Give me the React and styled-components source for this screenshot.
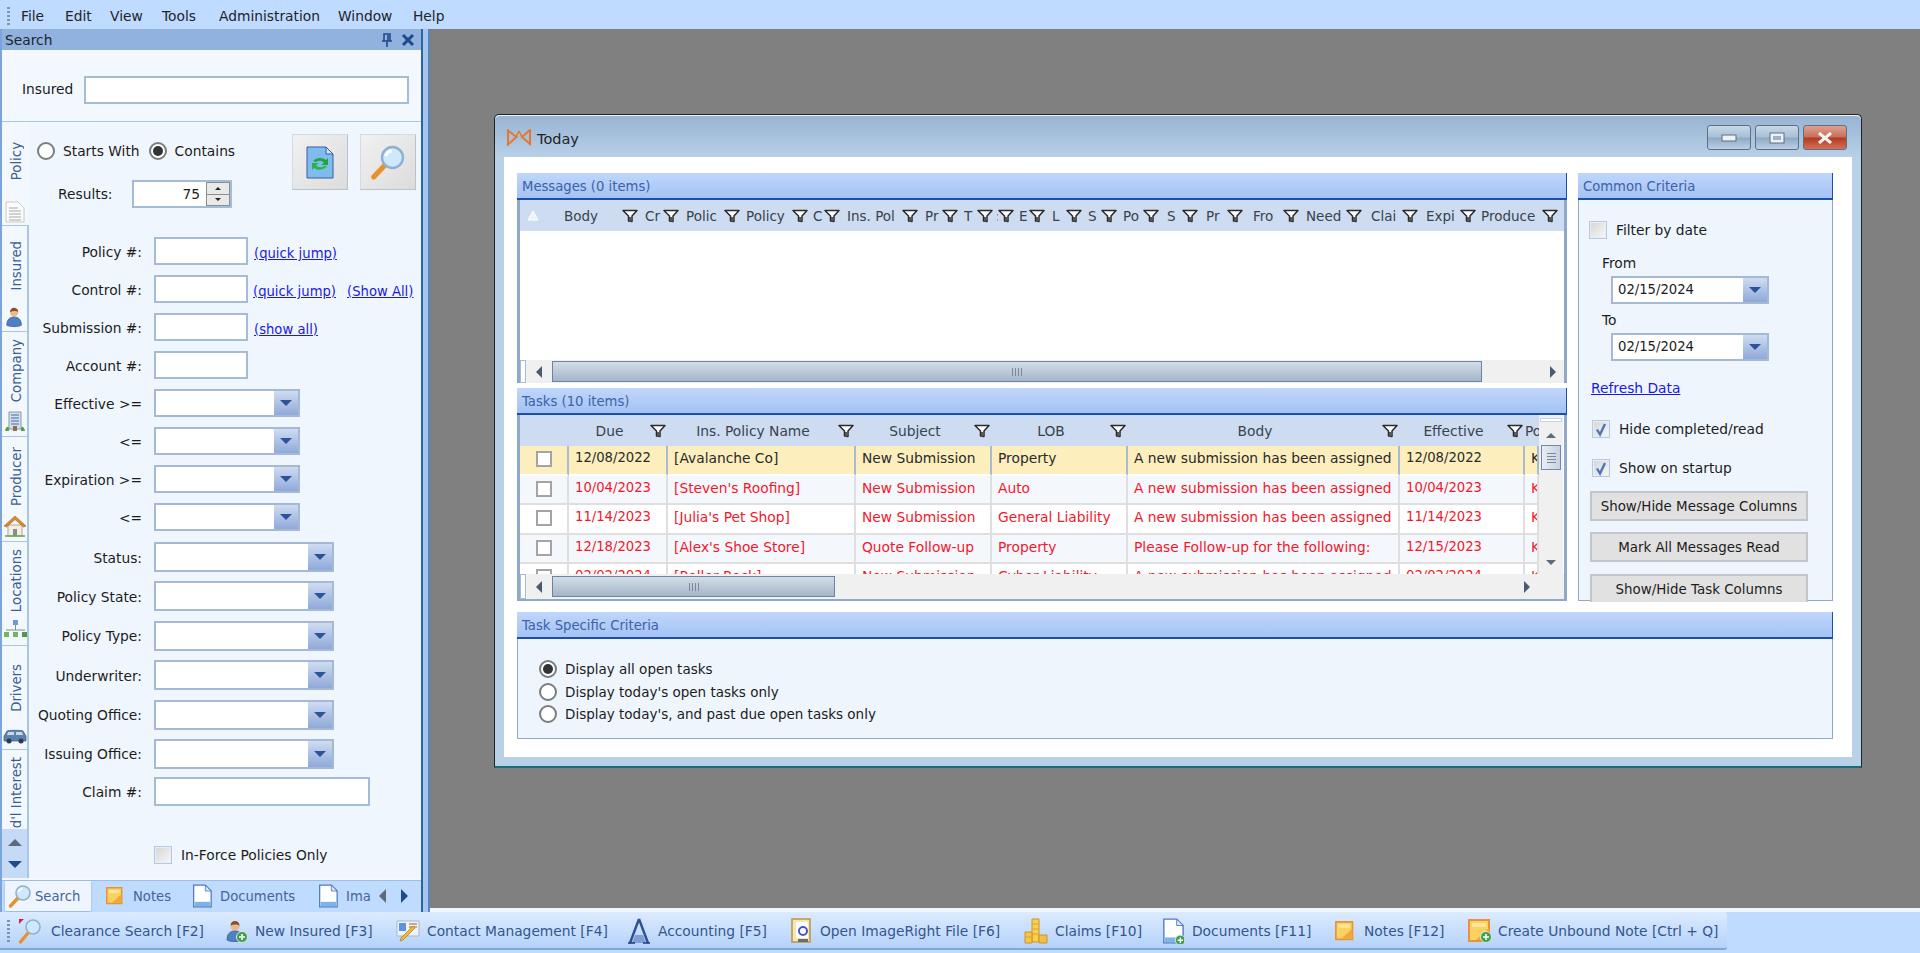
import React from 'react'
import styled, { createGlobalStyle } from 'styled-components'

const FONT = '"DejaVu Sans", "Noto Sans", sans-serif'
const LINK = '#1a1ae6'
const TASK_COLS = '49px 99px 188px 136px 136px 272px 125px 14px'

const GlobalStyle = createGlobalStyle`
  html, body { margin: 0; padding: 0; height: 100%; overflow: hidden; background: #bfdbff; }
  * { box-sizing: border-box; }
  body { font-family: ${FONT}; font-size: 13.8px; color: #1c1c1c; }
`

const Page = styled.div`
  width: 1920px;
  height: 953px;
  display: flex;
  flex-direction: column;
  background: #bfdbff;
`

/* ---------- menu ---------- */
const MenuBar = styled.div`
  height: 29px;
  flex: none;
  display: flex;
  align-items: center;
  padding: 2px 0 0 21px;
  background: #bfdbff;
`
const MenuItem = styled.div`
  width: ${p => p.$w}px;
  color: #22242a;
`
const Grip = styled.span`
  width: 3px;
  height: ${p => p.$h}px;
  flex: none;
  margin-left: ${p => p.$left}px;
  margin-right: ${p => p.$right}px;
  background: repeating-linear-gradient(to bottom, #7f93ad 0 2px, transparent 2px 4px);
`

/* ---------- workspace ---------- */
const Workspace = styled.div`
  flex: none;
  height: 883px;
  display: flex;
`
const SidePanel = styled.div`
  width: 421px;
  flex: none;
  display: flex;
  flex-direction: column;
  border-left: 2px solid #7ba4dc;
  background: #f3f8fe;
`
const PanelTitle = styled.div`
  height: 21px;
  flex: none;
  background: #91b2df;
  display: flex;
  align-items: center;
  padding: 0 6px 0 3px;
  color: #20242c;
  span { flex: 1; }
  svg { margin-left: 8px; }
`
const InsuredBar = styled.div`
  height: 72px;
  flex: none;
  display: flex;
  align-items: center;
  padding: 9px 0 0 20px;
  border-bottom: 1px solid #a9c6e8;
`
const InsuredLabel = styled.span`
  width: 62px;
  flex: none;
  padding-bottom: 2px;
`
const Input = styled.div`
  width: ${p => p.$w}px;
  height: ${p => p.$h || 28}px;
  flex: none;
  background: #fff;
  border: 2px solid #a5bcd8;
`
const SideBody = styled.div`
  flex: none;
  height: 756px;
  display: flex;
`
const Rail = styled.div`
  width: 27px;
  flex: none;
  display: flex;
  flex-direction: column;
  overflow: hidden;
`
const RailTab = styled.div`
  height: ${p => p.$h}px;
  flex: none;
  display: flex;
  flex-direction: column;
  align-items: center;
  overflow: hidden;
  border-right: ${p => (p.$active ? '2px solid transparent' : '2px solid #a9c6e8')};
  border-top: ${p => (p.$first ? 'none' : p.$active ? 'none' : '1px solid #a9c6e8')};
`
const RailLabel = styled.div`
  flex: 1;
  min-height: 0;
  display: flex;
  align-items: ${p => (p.$clip ? 'flex-start' : 'center')};
  justify-content: center;
  padding: ${p => (p.$clip ? 7 : 0)}px 0 0 3px;
  width: 100%;
  overflow: hidden;
  span {
    writing-mode: vertical-rl;
    transform: rotate(180deg);
    white-space: nowrap;
    font-size: 13.3px;
    color: #3b5f94;
  }
`
const RailIcon = styled.div`
  height: ${p => p.$h}px;
  flex: none;
  display: flex;
  align-items: flex-start;
  justify-content: center;
`
const RailScroll = styled.div`
  flex: 1;
  background: #c4daf7;
  border-right: 2px solid #a9c6e8;
  display: flex;
  flex-direction: column;
  align-items: center;
  justify-content: space-around;
  padding: 2px 0;
`
const FormArea = styled.div`
  flex: 1;
  display: flex;
  flex-direction: column;
  min-width: 0;
  background: #f0f6fe;
`
const SearchTop = styled.div`
  height: 115px;
  flex: none;
  display: flex;
  justify-content: space-between;
  padding: 12px 5px 0 8px;
`
const RadioRow = styled.div`
  display: flex;
  align-items: center;
  height: 18px;
  margin-top: 8px;
`
const RadioText = styled.span`
  margin: 0 9px 0 8px;
  white-space: nowrap;
`
const Radio = styled.span`
  width: 18px;
  height: 18px;
  flex: none;
  border-radius: 50%;
  border: 2px solid #7c7c7c;
  background: #fff;
  display: flex;
  align-items: center;
  justify-content: center;
  &::after {
    content: '';
    width: 10px;
    height: 10px;
    border-radius: 50%;
    background: ${p => (p.$on ? '#333' : 'transparent')};
  }
`
const ResultsRow = styled.div`
  display: flex;
  align-items: center;
  margin-top: 20px;
  padding-left: 21px;
`
const ResultsLabel = styled.span`
  width: 74px;
  flex: none;
`
const Spinner = styled.div`
  width: 100px;
  height: 28px;
  display: flex;
  background: #fff;
  border: 2px solid #a5bcd8;
`
const SpinValue = styled.div`
  flex: 1;
  text-align: right;
  padding-right: 6px;
  line-height: 24px;
`
const SpinBtns = styled.div`
  width: 24px;
  display: flex;
  flex-direction: column;
  gap: 1px;
  background: #8a8f96;
  padding: 1px;
`
const SpinBtn = styled.div`
  flex: 1;
  background: #e9e9e9;
  display: flex;
  align-items: center;
  justify-content: center;
`
const BigButtons = styled.div`
  display: flex;
  gap: 12px;
`
const BigButton = styled.div`
  width: 56px;
  height: 56px;
  background: linear-gradient(135deg, #f1f1f1, #dcdcdc);
  border: 1px solid #d2dbe5;
  border-right-color: #b9c3ce;
  border-bottom-color: #b9c3ce;
  display: flex;
  align-items: center;
  justify-content: center;
`
const FieldGroup = styled.div`
  display: flex;
  flex-direction: column;
  gap: ${p => p.$gap}px;
  margin-top: ${p => p.$top || 0}px;
`
const Field = styled.div`
  display: flex;
  align-items: center;
  height: ${p => p.$h}px;
`
const Label = styled.div`
  width: 113px;
  flex: none;
  margin-right: 12px;
  padding-top: 1px;
  text-align: right;
  white-space: nowrap;
`
const Link = styled.a`
  color: ${LINK};
  font-size: 13.2px;
  text-decoration: underline;
  white-space: nowrap;
  margin-left: ${p => p.$left}px;
  margin-top: 5px;
`
const ComboBox = styled.div`
  width: ${p => p.$w}px;
  height: ${p => p.$h}px;
  flex: none;
  display: flex;
  background: #fff;
  border: 2px solid #a3b9d6;
`
const ComboText = styled.div`
  flex: 1;
  padding-left: 5px;
  font-size: 13.2px;
  line-height: ${p => p.$h - 5}px;
`
const ComboBtn = styled.div`
  width: 24px;
  flex: none;
  background: linear-gradient(to bottom, #cfdcf2, #8fa9d8);
  display: flex;
  align-items: center;
  justify-content: center;
  &::after {
    content: '';
    border-left: 6px solid transparent;
    border-right: 6px solid transparent;
    border-top: 6px solid #2c5299;
  }
`
const CheckRow = styled.div`
  display: flex;
  align-items: center;
  gap: 9px;
  margin: ${p => p.$m};
`
const CheckBox = styled.span`
  width: 18px;
  height: 18px;
  flex: none;
  background: linear-gradient(135deg, #d5d5d5, #f8f8f8);
  border: 1px solid #b5c9e2;
  box-shadow: inset 0 0 0 1px #e6eef8;
  display: flex;
  align-items: center;
  justify-content: center;
`
const BottomTabs = styled.div`
  height: 33px;
  flex: none;
  margin-top: 2px;
  display: flex;
  align-items: flex-start;
  background: #bfdbff;
  border-top: 1px solid #9fbee4;
  padding-left: 3px;
  color: #45639a;
  font-size: 13.2px;
`
const BottomTab = styled.div`
  width: ${p => p.$w}px;
  height: 30px;
  flex: none;
  display: flex;
  align-items: center;
  gap: ${p => p.$gap}px;
  padding-left: ${p => p.$pad}px;
  overflow: hidden;
  white-space: nowrap;
  background: ${p => (p.$active ? '#eef5fe' : 'transparent')};
  box-shadow: ${p => (p.$active ? '0 1px 2px #8fb0da' : 'none')};
`
const Arrows = styled.div`
  display: flex;
  gap: 15px;
  height: 30px;
  align-items: center;
`

const Splitter = styled.div`
  width: 9px;
  flex: none;
  background: #a7c6ee;
  border-left: 2px solid #2f63a4;
  border-right: 2px solid #5b85b8;
`
const Desktop = styled.div`
  flex: 1;
  position: relative;
  background: #808080;
  border-bottom: 4px solid #f0f6fe;
`

/* ---------- today window ---------- */
const Win = styled.div`
  position: absolute;
  left: 64px;
  top: 85px;
  width: 1368px;
  height: 654px;
  display: flex;
  flex-direction: column;
  background: #b8d0e8;
  border: 1px solid #222;
  border-bottom: 2px solid #1a6d78;
  border-radius: 5px 5px 0 0;
  padding: 0 9px 9px;
`
const WinTitle = styled.div`
  height: 42px;
  flex: none;
  margin: 0 -9px;
  padding: 2px 14px 0 12px;
  display: flex;
  align-items: center;
  background: linear-gradient(to bottom, #98b4d2, #b8d0e8);
  border-top: 1px solid #eef4fa;
  border-radius: 5px 5px 0 0;
`
const WinName = styled.div`
  flex: 1;
  font-size: 14.5px;
  color: #1e2328;
  margin-left: 6px;
  padding-top: 3px;
`
const WinBtns = styled.div`
  display: flex;
  gap: 4px;
`
const WinBtn = styled.div`
  width: 44px;
  height: 25px;
  border: 1px solid #5e6f80;
  border-radius: 3px;
  display: flex;
  align-items: center;
  justify-content: center;
  background: ${p =>
    p.$close
      ? 'linear-gradient(to bottom, #e0a090 0, #c5705c 48%, #b03a20 52%, #d8705a 100%)'
      : 'linear-gradient(to bottom, #c8d8e8 0, #a9c0d8 48%, #8fa9c4 52%, #bcd0e4 100%)'};
`
const Client = styled.div`
  flex: 1;
  background: #fff;
  padding: 16px 19px 18px 13px;
  display: flex;
  flex-direction: column;
  gap: 11px;
  min-height: 0;
`
const TopRow = styled.div`
  height: 428px;
  flex: none;
  display: flex;
  gap: 11px;
`
const LeftCol = styled.div`
  width: 1050px;
  flex: none;
  display: flex;
  flex-direction: column;
  gap: 5px;
`
const GridSection = styled.div`
  height: ${p => p.$h}px;
  flex: none;
  display: flex;
  flex-direction: column;
`
const GroupHead = styled.div`
  height: 27px;
  flex: none;
  padding-left: 5px;
  line-height: 28px;
  font-size: 13.2px;
  color: #3c62a8;
  background: linear-gradient(to bottom, #c0d7fb, #a4c2f4);
  border-bottom: 2px solid #1c4fa6;
  border-right: 1px solid #1c4fa6;
  white-space: nowrap;
`
const GridBox = styled.div`
  flex: 1;
  min-height: 0;
  display: flex;
  flex-direction: column;
  background: #fff;
  border-left: 3px solid #8eaac8;
  border-right: 3px solid #8eaac8;
  border-bottom: ${p => (p.$foot ? '2px solid #8eaac8' : 'none')};
`
const GridHead = styled.div`
  height: 31px;
  flex: none;
  display: ${p => (p.$grid ? 'grid' : 'flex')};
  grid-template-columns: ${TASK_COLS};
  background: #cddcf0;
  overflow: hidden;
`
const HeadCell = styled.div`
  width: ${p => p.$w}px;
  flex: none;
  display: flex;
  align-items: center;
  padding-left: ${p => p.$pad}px;
  padding-right: 1px;
  color: #39424e;
  font-size: 13.5px;
  white-space: nowrap;
  overflow: hidden;
  span { flex: 1; overflow: hidden; }
  svg { flex: none; }
`
const TaskHeadCell = styled.div`
  display: flex;
  align-items: center;
  padding-right: 2px;
  color: #39424e;
  white-space: nowrap;
  overflow: hidden;
  span { flex: 1; text-align: center; }
  svg { flex: none; }
`
const MsgBody = styled.div`
  flex: 1;
`
const HScroll = styled.div`
  height: ${p => p.$h}px;
  flex: none;
  display: flex;
  align-items: center;
  background: #f0f0f0;
`
const ScrollStub = styled.span`
  width: 6px;
  height: 100%;
  flex: none;
  background: #fff;
  border: 1px solid #a5bcd8;
`
const ArrowCell = styled.span`
  width: ${p => p.$w}px;
  flex: none;
  display: flex;
  justify-content: center;
`
const Thumb = styled.div`
  width: ${p => p.$w}px;
  flex: none;
  height: 21px;
  background: linear-gradient(to bottom, #d4dde8, #a4b5c8);
  border: 1px solid #6d82a8;
  display: flex;
  align-items: center;
  justify-content: center;
`
const GripLines = styled.span`
  width: 10px;
  height: 8px;
  background: repeating-linear-gradient(to right, #7e8794 0 1px, transparent 1px 3px);
`
const EndArrow = styled.span`
  margin-left: auto;
  margin-right: ${p => p.$right}px;
  display: flex;
`
const TaskWrap = styled.div`
  flex: 1;
  min-height: 0;
  display: flex;
`
const TaskView = styled.div`
  width: 1019px;
  flex: none;
  overflow: hidden;
`
const TaskRow = styled.div`
  display: grid;
  grid-template-columns: ${TASK_COLS};
  height: 29.5px;
  background: ${p => (p.$sel ? '#fdeebd' : p.$alt ? '#f4f8fd' : '#fff')};
  color: ${p => (p.$sel ? '#2a2a2a' : '#f4172a')};
`
const TaskCell = styled.div`
  padding: 4px 0 0 6px;
  white-space: nowrap;
  overflow: hidden;
  font-size: ${p => (p.$date ? 13.2 : 13.8)}px;
  border-right: 2px solid ${p => (p.$sel ? '#a9bccf' : '#dfdfdf')};
  border-bottom: 2px solid ${p => (p.$sel ? '#fff' : '#dfdfdf')};
`
const TaskCheckCell = styled(TaskCell)`
  padding: 5px 0 0 16px;
`
const RowCheck = styled.span`
  display: block;
  width: 16px;
  height: 16px;
  background: #fff;
  border: 2px solid #a4a4a4;
`
const VScroll = styled.div`
  width: 24px;
  flex: none;
  display: flex;
  flex-direction: column;
  align-items: center;
  background: #f0f0f0;
`
const VStub = styled.span`
  width: 22px;
  height: 4px;
  margin: 3px 0 11px;
  background: #fff;
  border: 1px solid #c5d4e6;
`
const VThumb = styled.div`
  width: 20px;
  height: 25px;
  margin: 7px 0 auto;
  background: linear-gradient(to right, #e8eef5, #c5d2e2);
  border: 1px solid #7287ac;
  display: flex;
  align-items: center;
  justify-content: center;
  span {
    width: 9px;
    height: 10px;
    background: repeating-linear-gradient(to bottom, #7e8794 0 1px, transparent 1px 3px);
  }
`
const VEnd = styled.span`
  display: flex;
  margin-bottom: 9px;
`
const RightCol = styled.div`
  flex: 1;
  display: flex;
  flex-direction: column;
  min-width: 0;
`
const CriteriaBody = styled.div`
  flex: 1;
  min-height: 0;
  background: #eef5fd;
  border: 1px solid #92a9c4;
  border-top: none;
  padding: 21px 0 0 10px;
`
const SmallLabel = styled.div`
  margin: ${p => p.$m};
  line-height: 18px;
`
const ComboSlot = styled.div`
  margin: ${p => p.$m};
`
const RefreshLink = styled.a`
  display: block;
  color: ${LINK};
  text-decoration: underline;
  margin: 18px 0 0 2px;
  line-height: 18px;
`
const CmdButton = styled.div`
  width: 218px;
  height: ${p => p.$h}px;
  margin: ${p => p.$m};
  background: #e1e1e1;
  border: 2px solid #c0c6cc;
  border-bottom-width: ${p => (p.$cut ? 0 : 2)}px;
  display: flex;
  align-items: center;
  justify-content: center;
  white-space: nowrap;
  font-size: 13.4px;
`
const TaskPanel = styled.div`
  flex: 1;
  display: flex;
  flex-direction: column;
`
const TaskBody = styled.div`
  flex: 1;
  background: #eef5fd;
  border: 1px solid #92a9c4;
  border-top: none;
  padding: 21px 0 0 21px;
  display: flex;
  flex-direction: column;
  gap: 4.6px;
  font-size: 13.5px;
`
const OptionRow = styled.div`
  display: flex;
  align-items: center;
  gap: 8px;
  height: 18px;
`

/* ---------- bottom tool strip ---------- */
const ToolStrip = styled.div`
  height: 38px;
  width: 1727px;
  flex: none;
  display: flex;
  align-items: center;
  padding-top: 1px;
  background: linear-gradient(to bottom, #dcebff, #b5d2fa);
  border-bottom: 2px solid #7ca6df;
  border-radius: 0 3px 3px 0;
  color: #34558f;
`
const ToolItem = styled.div`
  width: ${p => p.$w}px;
  flex: none;
  display: flex;
  align-items: center;
  gap: ${p => p.$gap}px;
  white-space: nowrap;
`

/* ---------- drawings ---------- */
const Tri = ({ dir, size = 7, fill = '#2c5299' }) => {
  const pts = {
    up: `0,${size} ${size},0 ${size * 2},${size}`,
    down: `0,0 ${size * 2},0 ${size},${size}`,
  }
  if (dir === 'left' || dir === 'right') {
    return (
      <svg width={size} height={size * 2} viewBox={`0 0 ${size} ${size * 2}`}>
        <polygon fill={fill} points={dir === 'left' ? `${size},0 ${size},${size * 2} 0,${size}` : `0,0 ${size},${size} 0,${size * 2}`} />
      </svg>
    )
  }
  return (
    <svg width={size * 2} height={size} viewBox={`0 0 ${size * 2} ${size}`}>
      <polygon fill={fill} points={pts[dir]} />
    </svg>
  )
}
const Funnel = () => (
  <svg width="16" height="14" viewBox="0 0 16 14">
    <path d="M1 1.500h14L10 7v5.500L6.500 12V7z" fill="#fff" stroke="#2a2a2a" strokeWidth="1.500" strokeLinejoin="round" />
    <path d="M7 8h2.500v4.500H7z" fill="#555" />
  </svg>
)
const Loupe = ({ s = 24 }) => (
  <svg width={s} height={s} viewBox="0 0 24 24">
    <path d="M2.500 22L10 14" stroke="#e8912a" strokeWidth="3.400" strokeLinecap="round" />
    <circle cx="15" cy="9" r="7" fill="#cfe8fa" stroke="#8eb0d4" strokeWidth="1.600" />
    <path d="M10.500 8a5 5 0 0 1 4-3.500" stroke="#fff" strokeWidth="2" fill="none" />
  </svg>
)
const RefreshDoc = () => (
  <svg width="28" height="33" viewBox="0 0 28 33">
    <path d="M1 1h19l7 7v24H1z" fill="#7fbcec" stroke="#3a5aa8" />
    <path d="M20 1l7 7h-7z" fill="#c8e2f8" stroke="#3a5aa8" />
    <path d="M7 15a8 6 0 0 1 13-1l2-2v7h-7l3-2a5 4 0 0 0-8-1z" fill="#1fa33a" />
    <path d="M21 20a8 6 0 0 1-13 2l-2 2v-7h7l-3 2a5 4 0 0 0 8 1z" fill="#27b548" />
  </svg>
)
const PageLines = () => (
  <svg width="20" height="22" viewBox="0 0 20 22">
    <path d="M1 1h12l6 6v14H1z" fill="#fbfbfb" stroke="#c9c9c9" />
    <path d="M4 7h9M4 10h12M4 13h12M4 16h12M4 19h12" stroke="#a8a8a8" />
  </svg>
)
const PlusBadge = () => (
  <g>
    <circle cx="18" cy="18" r="5.500" fill="#3f9f50" stroke="#d6eed8" />
    <path d="M18 15v6M15 18h6" stroke="#fff" strokeWidth="1.600" />
  </g>
)
const Person = ({ s = 24, plus }) => (
  <svg width={s} height={s} viewBox="0 0 24 24">
    <circle cx="11" cy="7" r="4.500" fill="#eab98c" />
    <path d="M6.500 6.500a4.500 4.500 0 0 1 9 0c-2-1.500-6-1.500-9 0z" fill="#8a4f25" />
    <path d="M3 21c0-6 3-9 8-9s8 3 8 9c-3 2-13 2-16 0z" fill="#4f7fc4" stroke="#2d528c" strokeWidth=".7" />
    {plus && <PlusBadge />}
  </svg>
)
const Building = () => (
  <svg width="20" height="22" viewBox="0 0 20 22">
    <path d="M4 2h12v17H4z" fill="#d8dee6" stroke="#8c98a6" />
    <path d="M6 5h8M6 8h8M6 11h8M6 14h8" stroke="#6d93cc" strokeWidth="1.500" />
    <path d="M0 21c1-5 3-5 4-3v3zM20 21c-1-5-3-5-4-3v3z" fill="#54a04e" />
    <path d="M8 16h4v5H8z" fill="#8b6f4a" />
  </svg>
)
const House = () => (
  <svg width="24" height="22" viewBox="0 0 24 22">
    <path d="M5 10h14v11H5z" fill="#f4efe0" stroke="#b0a78e" />
    <path d="M1 11L12 1l11 10-2.500 1L12 4.500 3.500 12z" fill="#d88a2e" stroke="#a8641a" strokeWidth=".6" />
    <path d="M10 14h4v7h-4z" fill="#8d8d8d" />
    <path d="M2 21h20" stroke="#6aa85a" strokeWidth="1.600" />
  </svg>
)
const Network = () => (
  <svg width="24" height="19" viewBox="0 0 24 19">
    <rect x="10" y="1" width="5" height="5" fill="#6d9ad8" />
    <path d="M12.500 6v5M3 11h19" stroke="#8a8a8a" />
    <rect x="1" y="13" width="5" height="5" fill="#6cb760" />
    <rect x="10" y="13" width="5" height="5" fill="#6cb760" />
    <rect x="19" y="13" width="5" height="5" fill="#4f9a45" />
  </svg>
)
const Car = () => (
  <svg width="24" height="15" viewBox="0 0 24 15">
    <path d="M1 7l3-5c1-1 15-1 16 0l3 5v5H1z" fill="#5d81ad" stroke="#3d5a80" strokeWidth=".7" />
    <path d="M5 3h6v3H4zM13 3h6l1 3h-7z" fill="#c7d8ea" />
    <circle cx="6" cy="12" r="2.500" fill="#2e3a48" />
    <circle cx="18" cy="12" r="2.500" fill="#2e3a48" />
  </svg>
)
const Note = ({ plus, w = 18, h = 18 }) => (
  <svg width={w} height={h} viewBox="0 0 24 24">
    <path d="M1 1h20v21H1z" fill="#fbd25f" stroke="#e8923a" strokeWidth="2" />
    <path d="M8 21L21 9v12z" fill="#f0a83c" />
    <path d="M4 4h14v4H4z" fill="#fde79a" />
    {plus && <PlusBadge />}
  </svg>
)
const DocBlue = ({ plus, w = 20, h = 24 }) => (
  <svg width={w} height={h} viewBox="0 0 24 28">
    <path d="M2 1h14l7 7v19H2z" fill="#fff" stroke="#4d7cc0" strokeWidth="1.500" />
    <path d="M16 1l7 7h-7z" fill="#dbe8f8" stroke="#4d7cc0" />
    <path d="M3 21h19v5H3z" fill="#7db3e8" />
    {plus && (
      <g transform="translate(2 6)">
        <PlusBadge />
      </g>
    )}
  </svg>
)
const ClearanceIcon = () => (
  <svg width="24" height="26" viewBox="0 0 24 26">
    <path d="M1 1h5L1 6z" fill="#d9262e" />
    <path d="M2.500 24L10 15" stroke="#e8912a" strokeWidth="3.400" strokeLinecap="round" />
    <circle cx="15" cy="9" r="7" fill="#cfe8fa" stroke="#8eb0d4" strokeWidth="1.600" />
  </svg>
)
const ContactIcon = () => (
  <svg width="24" height="24" viewBox="0 0 24 24">
    <path d="M1 2h22v15H1z" fill="#eef3f9" stroke="#a8b6c6" />
    <path d="M3 4h7v8H3z" fill="#5d93d8" />
    <path d="M13 5h8M13 8h8" stroke="#c88a6a" strokeWidth="1.500" />
    <path d="M4 22l3-1 12-12-2-2L5 19z" fill="#efb93c" stroke="#a8791c" strokeWidth=".7" />
  </svg>
)
const AccountingIcon = () => (
  <svg width="22" height="26" viewBox="0 0 22 26">
    <path d="M11 1L2 25M11 1l9 24" stroke="#2d4f94" strokeWidth="2.400" fill="none" />
    <path d="M7 17h8l3 8H4z" fill="#7f9fd4" />
    <path d="M0 25h7M15 25h7" stroke="#1f3d78" strokeWidth="1.500" />
  </svg>
)
const ImageRightIcon = () => (
  <svg width="22" height="26" viewBox="0 0 22 26">
    <path d="M2 1h18v23H2z" fill="#f6e6ae" stroke="#b8954a" strokeWidth="1.500" />
    <path d="M6 4h12v16H6z" fill="#fff" />
    <circle cx="13" cy="13" r="4" fill="none" stroke="#4458c4" strokeWidth="2" />
    <path d="M8 24h10v-3H8z" fill="#6c6c6c" />
  </svg>
)
const CoinsIcon = () => (
  <svg width="24" height="26" viewBox="0 0 24 26">
    <path d="M8 1h7v23H8z" fill="#f8cf4f" stroke="#c9952a" />
    <path d="M1 14h7v11H1z" fill="#f6c544" stroke="#c9952a" />
    <path d="M15 17h8v8h-8z" fill="#f4bf3e" stroke="#c9952a" />
    <path d="M8 6h7M8 11h7M8 16h7M1 19h7" stroke="#d9a431" />
  </svg>
)
const BowTie = () => (
  <svg width="24" height="17" viewBox="0 0 24 17">
    <path d="M1 1.500v14L9.500 8zM23 1v14L15 8z" fill="none" stroke="#e6762e" strokeWidth="2" />
    <path d="M9 8l3-6M15 8l-3-6" stroke="#e6762e" strokeWidth="1.500" />
  </svg>
)
const Tick = () => (
  <svg width="14" height="15" viewBox="0 0 14 15">
    <path d="M3 7.500l3 5L11 2" fill="none" stroke="#4d78b8" strokeWidth="2.400" />
  </svg>
)

/* ---------- data ---------- */
const MENU = [['File', 44], ['Edit', 45], ['View', 52], ['Tools', 57], ['Administration', 119], ['Window', 75], ['Help', 50]]

const RAIL = [
  { label: 'Policy', h: 103, icon: <PageLines />, ih: 24, active: true, first: true },
  { label: 'Insured', h: 106, icon: <Person s={22} />, ih: 25 },
  { label: 'Company', h: 105, icon: <Building />, ih: 26 },
  { label: 'Producer', h: 105, icon: <House />, ih: 26 },
  { label: 'Locations', h: 104, icon: <Network />, ih: 26 },
  { label: 'Drivers', h: 104, icon: <Car />, ih: 20 },
]

const TEXT_FIELDS = [
  { label: 'Policy #:', links: [['(quick jump)', 6]] },
  { label: 'Control #:', links: [['(quick jump)', 5], ['(Show All)', 11]] },
  { label: 'Submission #:', links: [['(show all)', 6]] },
  { label: 'Account #:', links: [] },
]
const DATE_FIELDS = ['Effective >=', '<=', 'Expiration >=', '<=']
const COMBO_FIELDS = ['Status:', 'Policy State:', 'Policy Type:', 'Underwriter:', 'Quoting Office:', 'Issuing Office:']

const MSG_COLS = [
  ['Body', 95, 20], ['Cr', 41, 6], ['Polic', 61, 6], ['Policy', 68, 5], ['C', 32, 4], ['Ins. Pol', 78, 6],
  ['Pr', 40, 6], ['T', 35, 5], [':', 21, 2], ['E', 31, 4], ['L', 37, 6], ['S', 35, 5], ['Po', 42, 5],
  ['S', 39, 7], ['Pr', 45, 7], ['Fro', 56, 9], ['Need', 63, 6], ['Clai', 56, 8], ['Expi', 58, 7], ['Produce', 82, 4],
]
const TASK_HEAD = ['Due', 'Ins. Policy Name', 'Subject', 'LOB', 'Body', 'Effective']
const ASSIGNED = 'A new submission has been assigned'
const TASKS = [
  ['12/08/2022', '[Avalanche Co]', 'New Submission', 'Property', ASSIGNED, '12/08/2022', 'K'],
  ['10/04/2023', "[Steven's Roofing]", 'New Submission', 'Auto', ASSIGNED, '10/04/2023', 'K'],
  ['11/14/2023', "[Julia's Pet Shop]", 'New Submission', 'General Liability', ASSIGNED, '11/14/2023', 'K'],
  ['12/18/2023', "[Alex's Shoe Store]", 'Quote Follow-up', 'Property', 'Please Follow-up for the following:', '12/15/2023', 'K'],
  ['02/02/2024', '[Roller Rock]', 'New Submission', 'Cyber Liability', ASSIGNED, '02/02/2024', 'K'],
]
const DATE_COLUMNS = [0, 5]
const OPTIONS = ['Display all open tasks', "Display today's open tasks only", "Display today's, and past due open tasks only"]
const TOOLS = [
  ['Clearance Search [F2]', <ClearanceIcon />, 206, 9],
  ['New Insured [F3]', <Person s={24} plus />, 172, 7],
  ['Contact Management [F4]', <ContactIcon />, 232, 7],
  ['Accounting [F5]', <AccountingIcon />, 162, 8],
  ['Open ImageRight File [F6]', <ImageRightIcon />, 234, 8],
  ['Claims [F10]', <CoinsIcon />, 138, 7],
  ['Documents [F11]', <DocBlue plus w={22} h={26} />, 173, 8],
  ['Notes [F12]', <Note w={20} h={24} />, 133, 9],
  ['Create Unbound Note [Ctrl + Q]', <Note plus w={24} h={26} />, 255, 6],
]

const Combo = ({ w, h, text }) => (
  <ComboBox $w={w} $h={h}>
    <ComboText $h={h}>{text}</ComboText>
    <ComboBtn />
  </ComboBox>
)

const ScrollBar = ({ h, thumb, endRight }) => (
  <HScroll $h={h}>
    <ScrollStub />
    <ArrowCell $w={26}><Tri dir="left" size={6} fill="#4a5a72" /></ArrowCell>
    <Thumb $w={thumb}><GripLines /></Thumb>
    <EndArrow $right={endRight}><Tri dir="right" size={6} fill="#4a5a72" /></EndArrow>
  </HScroll>
)

const App = () => {
  return (
    <Page>
      <GlobalStyle />
      <MenuBar>
        <Grip $h={18} $left={-14} $right={11} />
        {MENU.map(([name, w]) => <MenuItem key={name} $w={w}>{name}</MenuItem>)}
      </MenuBar>

      <Workspace>
        <SidePanel>
          <PanelTitle>
            <span>Search</span>
            <svg width="12" height="14" viewBox="0 0 12 14">
              <path d="M3 1h6v7H3zM1 8h10M6 8v6M7 2v6" fill="none" stroke="#1f4a8c" strokeWidth="1.600" />
            </svg>
            <svg width="14" height="14" viewBox="0 0 14 14">
              <path d="M2 2l10 10M12 2L2 12" stroke="#1f4a8c" strokeWidth="3" />
            </svg>
          </PanelTitle>
          <InsuredBar>
            <InsuredLabel>Insured</InsuredLabel>
            <Input $w={325} />
          </InsuredBar>
          <SideBody>
            <Rail>
              {RAIL.map(t => (
                <RailTab key={t.label} $h={t.h} $active={t.active} $first={t.first}>
                  <RailLabel><span>{t.label}</span></RailLabel>
                  <RailIcon $h={t.ih}>{t.icon}</RailIcon>
                </RailTab>
              ))}
              <RailTab $h={80}>
                <RailLabel $clip><span>Add'l Interest</span></RailLabel>
              </RailTab>
              <RailScroll>
                <Tri dir="up" size={7} fill="#5f6b7c" />
                <Tri dir="down" size={7} fill="#1f4a8c" />
              </RailScroll>
            </Rail>
            <FormArea>
              <SearchTop>
                <div>
                  <RadioRow>
                    <Radio />
                    <RadioText>Starts With</RadioText>
                    <Radio $on />
                    <RadioText>Contains</RadioText>
                  </RadioRow>
                  <ResultsRow>
                    <ResultsLabel>Results:</ResultsLabel>
                    <Spinner>
                      <SpinValue>75</SpinValue>
                      <SpinBtns>
                        <SpinBtn><Tri dir="up" size={3} fill="#222" /></SpinBtn>
                        <SpinBtn><Tri dir="down" size={3} fill="#222" /></SpinBtn>
                      </SpinBtns>
                    </Spinner>
                  </ResultsRow>
                </div>
                <BigButtons>
                  <BigButton><RefreshDoc /></BigButton>
                  <BigButton><Loupe s={36} /></BigButton>
                </BigButtons>
              </SearchTop>

              <FieldGroup $gap={10}>
                {TEXT_FIELDS.map(f => (
                  <Field key={f.label} $h={28}>
                    <Label>{f.label}</Label>
                    <Input $w={94} />
                    {f.links.map(([text, left]) => <Link key={text} $left={left}>{text}</Link>)}
                  </Field>
                ))}
                {DATE_FIELDS.map((label, i) => (
                  <Field key={i} $h={28}>
                    <Label>{label}</Label>
                    <Combo w={146} h={28} />
                  </Field>
                ))}
              </FieldGroup>
              <FieldGroup $gap={9.4} $top={11}>
                {COMBO_FIELDS.map(label => (
                  <Field key={label} $h={30}>
                    <Label>{label}</Label>
                    <Combo w={180} h={30} />
                  </Field>
                ))}
              </FieldGroup>
              <FieldGroup $gap={0} $top={8}>
                <Field $h={29}>
                  <Label>Claim #:</Label>
                  <Input $w={216} $h={29} />
                </Field>
              </FieldGroup>
              <CheckRow $m="40px 0 0 125px">
                <CheckBox />
                <span>In-Force Policies Only</span>
              </CheckRow>
            </FormArea>
          </SideBody>
          <BottomTabs>
            <BottomTab $active $w={86} $pad={3} $gap={3}><Loupe s={24} />Search</BottomTab>
            <BottomTab $w={101} $pad={15} $gap={9}><Note />Notes</BottomTab>
            <BottomTab $w={126} $pad={0} $gap={8}><DocBlue />Documents</BottomTab>
            <BottomTab $w={61} $pad={0} $gap={8}><DocBlue />Ima</BottomTab>
            <Arrows>
              <Tri dir="left" size={7} fill="#5f6b7c" />
              <Tri dir="right" size={7} fill="#1f4a8c" />
            </Arrows>
          </BottomTabs>
        </SidePanel>
        <Splitter />

        <Desktop>
          <Win>
            <WinTitle>
              <BowTie />
              <WinName>Today</WinName>
              <WinBtns>
                <WinBtn>
                  <svg width="16" height="8" viewBox="0 0 16 8"><rect x="1" y="1" width="14" height="6" fill="#eef2f6" stroke="#5e6f80" /></svg>
                </WinBtn>
                <WinBtn>
                  <svg width="16" height="12" viewBox="0 0 16 12"><rect x="1" y="1" width="14" height="10" fill="#eef2f6" stroke="#5e6f80" /><rect x="4" y="4" width="8" height="4" fill="#9db2c8" /></svg>
                </WinBtn>
                <WinBtn $close>
                  <svg width="16" height="12" viewBox="0 0 16 12"><path d="M2 1l12 10M14 1L2 11" stroke="#f4f4f4" strokeWidth="3" /></svg>
                </WinBtn>
              </WinBtns>
            </WinTitle>
            <Client>
              <TopRow>
                <LeftCol>
                  <GridSection $h={210}>
                    <GroupHead>Messages (0 items)</GroupHead>
                    <GridBox>
                      <GridHead>
                        <HeadCell $w={24} $pad={7}>
                          <svg width="12" height="11" viewBox="0 0 12 11"><path d="M6 1l5 9H1z" fill="#eef3fa" stroke="#fff" /></svg>
                        </HeadCell>
                        {MSG_COLS.map(([name, w, pad], i) => (
                          <HeadCell key={i} $w={w} $pad={pad}><span>{name}</span><Funnel /></HeadCell>
                        ))}
                      </GridHead>
                      <MsgBody />
                      <ScrollBar h={23} thumb={930} endRight={8} />
                    </GridBox>
                  </GridSection>
                  <GridSection $h={213}>
                    <GroupHead>Tasks (10 items)</GroupHead>
                    <GridBox $foot>
                      <TaskWrap>
                        <TaskView>
                          <GridHead $grid>
                            <div />
                            {TASK_HEAD.map(name => (
                              <TaskHeadCell key={name}><span>{name}</span><Funnel /></TaskHeadCell>
                            ))}
                            <TaskHeadCell>Po</TaskHeadCell>
                          </GridHead>
                          {TASKS.map((row, i) => (
                            <TaskRow key={i} $sel={i === 0} $alt={i % 2 === 1}>
                              <TaskCheckCell $sel={i === 0}><RowCheck /></TaskCheckCell>
                              {row.map((v, j) => (
                                <TaskCell key={j} $sel={i === 0} $date={DATE_COLUMNS.includes(j)}>{v}</TaskCell>
                              ))}
                            </TaskRow>
                          ))}
                        </TaskView>
                        <VScroll>
                          <VStub />
                          <Tri dir="up" size={5} fill="#5f6b7c" />
                          <VThumb><span /></VThumb>
                          <VEnd><Tri dir="down" size={5} fill="#5f6b7c" /></VEnd>
                        </VScroll>
                      </TaskWrap>
                      <ScrollBar h={25} thumb={283} endRight={34} />
                    </GridBox>
                  </GridSection>
                </LeftCol>
                <RightCol>
                  <GroupHead>Common Criteria</GroupHead>
                  <CriteriaBody>
                    <CheckRow $m="0">
                      <CheckBox />
                      <span>Filter by date</span>
                    </CheckRow>
                    <SmallLabel $m="15px 0 0 13px">From</SmallLabel>
                    <ComboSlot $m="4px 0 0 22px"><Combo w={158} h={28} text="02/15/2024" /></ComboSlot>
                    <SmallLabel $m="7px 0 0 13px">To</SmallLabel>
                    <ComboSlot $m="4px 0 0 22px"><Combo w={158} h={28} text="02/15/2024" /></ComboSlot>
                    <RefreshLink>Refresh Data</RefreshLink>
                    <CheckRow $m="23px 0 0 3px">
                      <CheckBox><Tick /></CheckBox>
                      <span>Hide completed/read</span>
                    </CheckRow>
                    <CheckRow $m="21px 0 0 3px">
                      <CheckBox><Tick /></CheckBox>
                      <span>Show on startup</span>
                    </CheckRow>
                    <CmdButton $h={30} $m="14px 0 0 1px">Show/Hide Message Columns</CmdButton>
                    <CmdButton $h={30} $m="11px 0 0 1px">Mark All Messages Read</CmdButton>
                    <CmdButton $h={28} $m="12px 0 0 1px" $cut>Show/Hide Task Columns</CmdButton>
                  </CriteriaBody>
                </RightCol>
              </TopRow>
              <TaskPanel>
                <GroupHead>Task Specific Criteria</GroupHead>
                <TaskBody>
                  {OPTIONS.map((text, i) => (
                    <OptionRow key={text}>
                      <Radio $on={i === 0} />
                      <span>{text}</span>
                    </OptionRow>
                  ))}
                </TaskBody>
              </TaskPanel>
            </Client>
          </Win>
        </Desktop>
      </Workspace>

      <ToolStrip>
        <Grip $h={22} $left={7} $right={8} />
        {TOOLS.map(([label, icon, w, gap]) => (
          <ToolItem key={label} $w={w} $gap={gap}>{icon}<span>{label}</span></ToolItem>
        ))}
      </ToolStrip>
    </Page>
  )
}

export default App
